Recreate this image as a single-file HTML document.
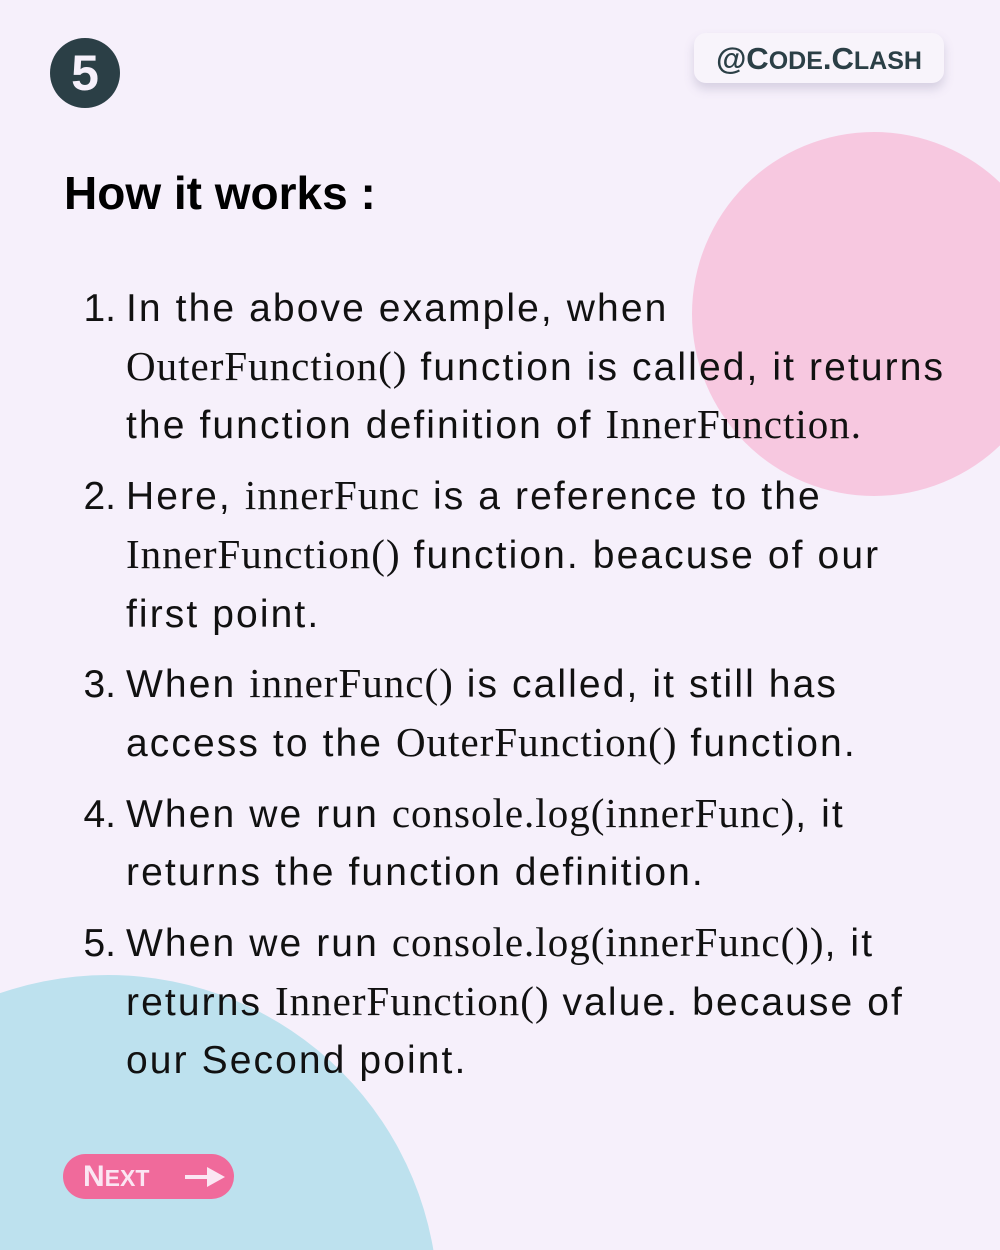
<!DOCTYPE html>
<html><head><style>
html,body{margin:0;width:1000px;height:1250px;overflow:hidden;}
#w{position:relative;width:1000px;height:1250px;overflow:hidden;background:#f6f0fb;font-family:"Liberation Sans",sans-serif;}
.pc{position:absolute;left:692px;top:132px;width:364px;height:364px;border-radius:50%;background:#f7c8e0;}
.bc{position:absolute;left:-222px;top:975px;width:660px;height:660px;border-radius:50%;background:#bde1ee;}
.num{position:absolute;left:50px;top:38px;width:70px;height:70px;border-radius:50%;background:#2b3f46;color:#f6f0fb;font-weight:bold;font-size:50px;text-align:center;line-height:70px;}
.tag{position:absolute;left:694px;top:33px;width:250px;height:50px;border-radius:12px;background:#f8f4fb;box-shadow:0 6px 10px rgba(120,110,150,.25);color:#2b3f46;font-size:31px;line-height:52px;text-align:center;font-weight:bold;}
.tag small{font-size:25px}
h1{position:absolute;left:64px;top:166px;margin:0;font-size:46px;font-weight:bold;letter-spacing:0px;color:#000;}
ol{position:absolute;left:126px;top:280px;margin:0;padding:0;list-style:none;width:900px;font-size:39px;letter-spacing:2.1px;color:#111;white-space:nowrap;}
li{position:relative;line-height:58.7px;margin-bottom:12px;}
li b{position:absolute;left:-48px;font-weight:normal;width:38px;text-align:right;letter-spacing:0}
.s{font-family:"Liberation Serif",serif;font-size:41px;letter-spacing:1px;line-height:0;}
.next{position:absolute;left:63px;top:1154px;width:171px;height:45px;border-radius:23px;background:#f06a9b;color:#fbe6f3;font-weight:bold;font-size:30px;line-height:45px;}
.next span{position:absolute;left:20px}
.next small{font-size:23px}
</style></head><body><div id="w">
<div class="pc"></div><div class="bc"></div>
<div class="num">5</div>
<div class="tag">@C<small>ODE</small>.C<small>LASH</small></div>
<h1>How it works :</h1>
<ol>
<li><b>1.</b>In the above example, when<br><span class="s">OuterFunction()</span> function is called, it returns<br>the function definition of <span class="s">InnerFunction.</span></li>
<li><b>2.</b>Here, <span class="s">innerFunc</span> is a reference to the<br><span class="s">InnerFunction()</span> function. beacuse of our<br>first point.</li>
<li><b>3.</b>When <span class="s">innerFunc()</span> is called, it still has<br>access to the <span class="s">OuterFunction()</span> function.</li>
<li><b>4.</b>When we run <span class="s">console.log(innerFunc)</span>, it<br>returns the function definition.</li>
<li><b>5.</b>When we run <span class="s">console.log(innerFunc())</span>, it<br>returns <span class="s">InnerFunction()</span> value. because of<br>our Second point.</li>
</ol>
<div class="next"><span>N<small>EXT</small></span>
<svg style="position:absolute;left:120px;top:11px" width="44" height="24" viewBox="0 0 44 24"><path d="M2 12H26" stroke="#fbe6f3" stroke-width="4"/><path d="M24 2L42 12L24 22Z" fill="#fbe6f3"/></svg></div>
</div></body></html>
